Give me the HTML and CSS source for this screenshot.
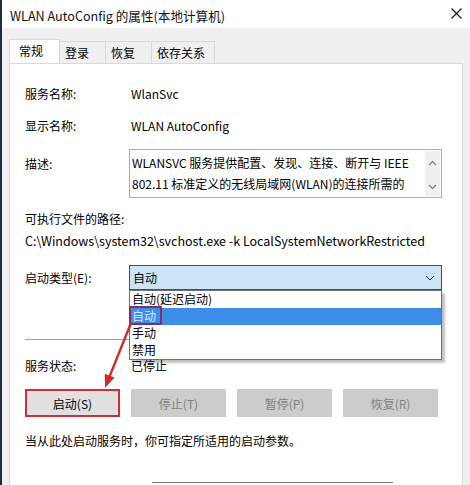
FILE: index.html
```html
<!DOCTYPE html>
<html>
<head>
  <meta charset="utf-8">
  <title>WLAN AutoConfig 的属性(本地计算机)</title>
  <link rel="stylesheet" href="styles.css">
</head>
<body>
  <div class="window">
    <div class="titlebar">
      <span class="title">WLAN AutoConfig 的属性(本地计算机)</span>
      <svg class="close" width="11" height="11" viewBox="0 0 11 11"><path d="M0.5 0.5 L10.5 10.5 M10.5 0.5 L0.5 10.5" stroke="#111" stroke-width="1.1" fill="none"/></svg>
    </div>
    <div class="client">
      <div class="tabs">
        <div class="tab active">常规</div>
        <div class="tab t2">登录</div>
        <div class="tab t2">恢复</div>
        <div class="tab t4">依存关系</div>
      </div>
      <div class="panel">
        <div class="row first">
          <div class="label">服务名称:</div>
          <div class="value">WlanSvc</div>
        </div>
        <div class="row gap8">
          <div class="label">显示名称:</div>
          <div class="value">WLAN AutoConfig</div>
        </div>
        <div class="row desc-row">
          <div class="label desc-label">描述:</div>
          <div class="textbox">
            <div class="desc-text">WLANSVC 服务提供配置、发现、连接、断开与 IEEE<br>802.11 标准定义的无线局域网(WLAN)的连接所需的</div>
            <div class="scroll">
              <svg width="9" height="6" viewBox="0 0 9 6"><path d="M1 5 L4.5 1.5 L8 5" stroke="#777" stroke-width="1.1" fill="none"/></svg>
              <svg width="9" height="6" viewBox="0 0 9 6"><path d="M1 1 L4.5 4.5 L8 1" stroke="#777" stroke-width="1.1" fill="none"/></svg>
            </div>
          </div>
        </div>
        <div class="line path-label">可执行文件的路径:</div>
        <div class="line path">C:\Windows\system32\svchost.exe -k LocalSystemNetworkRestricted</div>
        <div class="row combo-row">
          <div class="label">启动类型(E):</div>
          <div class="combo-wrap">
            <div class="combo">
              <span>自动</span>
              <svg width="10" height="6" viewBox="0 0 10 6"><path d="M1 1 L5 5 L9 1" stroke="#333" stroke-width="1" fill="none"/></svg>
            </div>
            <div class="dropdown">
              <div class="item">自动(延迟启动)</div>
              <div class="item selected">自动</div>
              <div class="item">手动</div>
              <div class="item">禁用</div>
            </div>
            <div class="mark"></div>
          </div>
        </div>
        <div class="separator"></div>
        <div class="row status-row">
          <div class="label">服务状态:</div>
          <div class="value">已停止</div>
        </div>
        <div class="buttons">
          <div class="btn start">启动(S)</div>
          <div class="btn off">停止(T)</div>
          <div class="btn off">暂停(P)</div>
          <div class="btn off">恢复(R)</div>
        </div>
        <div class="line hint">当从此处启动服务时，你可指定所适用的启动参数。</div>
        <div class="params-row">
          <div class="params-box"></div>
        </div>
        <svg class="arrow" width="60" height="80" viewBox="0 0 60 80">
          <path d="M36 1 L14.8 53.9" stroke="#d3282c" stroke-width="2.4" fill="none"/>
          <path d="M10 66 L19.6 55.6 L9.8 51.8 Z" fill="#d3282c"/>
        </svg>
      </div>
    </div>
  </div>
</body>
</html>
```

FILE: styles.css
```css
body, html {
  margin: 0;
  width: 470px;
  height: 485px;
  overflow: hidden;
}
body {
  font-family: "Noto Sans CJK SC", "Noto Sans", sans-serif;
  font-size: 12px;
  color: #000;
}
.window {
  height: 485px;
  border-left: 2px solid #1f2c48;
  background: #f0f0f0;
  display: flex;
  flex-direction: column;
}
.titlebar {
  height: 28px;
  background: #fff;
  display: flex;
  align-items: center;
  justify-content: space-between;
  padding: 0 8px 0 8px;
  flex-shrink: 0;
}
.title {
  font-size: 12.6px;
  color: #111;
  padding-top: 2px;
}
.close {
  margin-top: -2px;
}
.client {
  flex: 1;
  padding: 10px 7px 0 7px;
  display: flex;
  flex-direction: column;
}
.tabs {
  display: flex;
  align-items: flex-end;
  height: 25px;
  flex-shrink: 0;
}
.tab {
  height: 22px;
  line-height: 21px;
  padding-left: 5px;
  border: 1px solid #d9d9d9;
  border-bottom: none;
  border-left: none;
  box-sizing: border-box;
  background: #f0f0f0;
}
.tab.t2 {
  width: 46px;
}
.tab.t4 {
  width: 63px;
}
.tab.active {
  width: 51px;
  height: 25px;
  line-height: 22px;
  background: #fff;
  border-left: 1px solid #d9d9d9;
  padding-left: 9px;
  margin-bottom: -1px;
  position: relative;
}
.panel {
  flex: 1;
  background: #fff;
  border: 1px solid #d9d9d9;
  padding: 17px 15px 0 15px;
  position: relative;
  overflow: hidden;
}
.row {
  display: flex;
  align-items: center;
  height: 24px;
}
.gap8 {
  margin-top: 8px;
}
.label {
  width: 104px;
  flex-shrink: 0;
}
.value {
  padding-left: 2px;
}
.desc-row {
  margin-top: 12px;
  height: auto;
  align-items: flex-start;
}
.desc-label {
  padding-top: 6px;
}
.textbox {
  width: 313px;
  height: 49px;
  box-sizing: border-box;
  border: 1px solid #acacac;
  display: flex;
}
.desc-text {
  flex: 1;
  padding: 2px 0 0 2px;
  line-height: 21px;
  white-space: nowrap;
}
.scroll {
  width: 15px;
  background: #f0f0f0;
  margin: 1px;
  display: flex;
  flex-direction: column;
  justify-content: space-between;
  align-items: center;
  padding: 9px 0 6px;
}
.line {
  line-height: 16px;
  white-space: nowrap;
}
.path-label {
  margin-top: 13px;
}
.path {
  margin-top: 6px;
  font-size: 12.5px;
}
.combo-row {
  margin-top: 16px;
  height: 25px;
}
.combo-wrap {
  position: relative;
  width: 313px;
}
.combo {
  height: 25px;
  box-sizing: border-box;
  background: #cce4f7;
  border: 1px solid #2f5478;
  display: flex;
  align-items: center;
  justify-content: space-between;
  padding: 0 6px 0 3px;
}
.dropdown {
  position: absolute;
  left: 0;
  top: 25px;
  width: 313px;
  box-sizing: border-box;
  background: #fff;
  border: 1px solid #707070;
  box-shadow: 3px 3px 2px rgba(0, 0, 0, 0.25);
  z-index: 2;
}
.item {
  height: 17px;
  line-height: 16px;
  padding-left: 2px;
}
.item.selected {
  background: #3d8ee8;
  color: #d8ecff;
}
.mark {
  position: absolute;
  left: 0;
  top: 41px;
  width: 33px;
  height: 19px;
  box-sizing: border-box;
  border: 2px solid #8a2d62;
  z-index: 3;
}
.separator {
  margin-top: 49px;
  height: 1px;
  background: #a0a0a0;
  width: 417px;
}
.status-row {
  margin-top: 13px;
}
.buttons {
  display: flex;
  gap: 11px;
  margin-top: 12px;
}
.btn {
  width: 95px;
  height: 28px;
  box-sizing: border-box;
  display: flex;
  align-items: center;
  justify-content: center;
  background: #ccc;
  color: #838383;
  border: 1px solid #ccc;
}
.btn.start {
  background: #e1e1e1;
  color: #000;
  border: 2px solid #c8333b;
}
.hint {
  margin-top: 16px;
}
.params-row {
  margin-top: 33px;
  padding-left: 127px;
}
.params-box {
  width: 241px;
  height: 24px;
  border-top: 1px solid #7a7a7a;
}
.arrow {
  position: absolute;
  left: 85px;
  top: 258px;
  z-index: 4;
}
```
